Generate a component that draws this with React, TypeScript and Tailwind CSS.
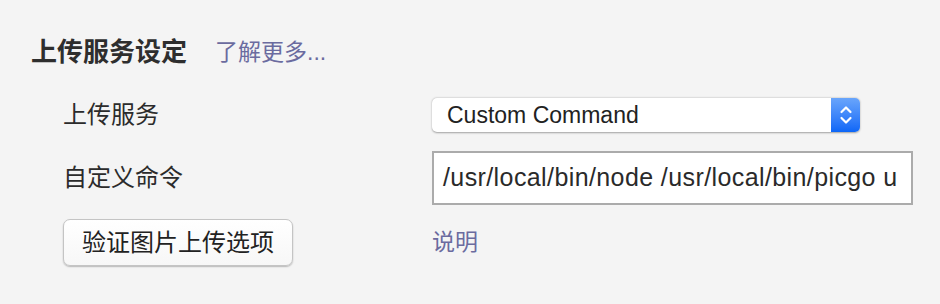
import React from 'react'

const cjk = "font-['Liberation_Sans','Noto_Sans_CJK_SC',sans-serif]"

const SelectArrows = () => (
  <svg width="14" height="22" viewBox="0 0 14 22" fill="none">
    <path d="M2.5 8 L7 3.5 L11.5 8" stroke="white" strokeWidth="2.2" strokeLinecap="round" strokeLinejoin="round" />
    <path d="M2.5 14 L7 18.5 L11.5 14" stroke="white" strokeWidth="2.2" strokeLinecap="round" strokeLinejoin="round" />
  </svg>
)

const App = () => {
  return (
    <div className={`w-[940px] h-[304px] bg-[#f4f4f4] ${cjk}`}>
      <div className="pt-[34px] pl-[31px] flex items-center h-[70px] gap-[28px]">
        <span className="text-[26px] font-bold text-[#2e2e2e] leading-none">上传服务设定</span>
        <span className="text-[23px] text-[#6b6b9f] leading-none">了解更多...</span>
      </div>

      <div className="mt-[28px] pl-[63px] flex flex-col">
        <div className="flex items-center h-[34px]">
          <span className="w-[369px] text-[24px] text-[#2b2b2b]">上传服务</span>
          <div className="flex w-[428px] h-[34px] rounded-[5px] bg-white shadow-[0_0.5px_2px_rgba(0,0,0,0.35)] overflow-hidden">
            <span className="flex-1 pl-[15px] flex items-center text-[23px] text-[#222] font-['Liberation_Sans',sans-serif]">
              Custom Command
            </span>
            <div className="w-[29px] h-full flex items-center justify-center bg-gradient-to-b from-[#69a5fb] to-[#0b66f7]">
              <SelectArrows />
            </div>
          </div>
        </div>

        <div className="mt-[19px] flex items-center h-[54px]">
          <span className="w-[369px] text-[24px] text-[#2b2b2b]">自定义命令</span>
          <div className="w-[481px] h-[54px] bg-white border-2 border-[#ababab] flex items-center pl-[9px] overflow-hidden">
            <span className="text-[25px] tracking-[0.4px] text-[#2a2a2a] whitespace-nowrap font-['Liberation_Sans',sans-serif]">
              /usr/local/bin/node /usr/local/bin/picgo u
            </span>
          </div>
        </div>

        <div className="mt-[14px] flex items-center h-[47px]">
          <div className="w-[369px]">
            <button className="w-[230px] h-[47px] rounded-[7px] border border-[#c4c4c4] bg-gradient-to-b from-white to-[#f7f7f7] shadow-[0_1px_1.5px_rgba(0,0,0,0.25)] text-[24px] text-[#222] flex items-center justify-center">
              验证图片上传选项
            </button>
          </div>
          <span className="text-[23px] text-[#6b6b9f]">说明</span>
        </div>
      </div>
    </div>
  )
}

export default App
